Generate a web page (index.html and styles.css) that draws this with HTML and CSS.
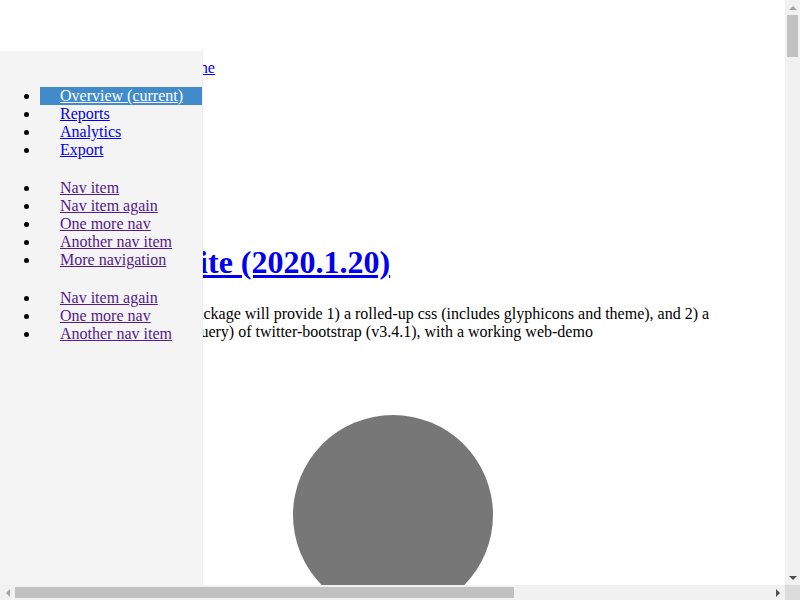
FILE: index.html
```html
<!DOCTYPE html>
<html>
<head>
<meta charset="utf-8">
<title>bootstrap-lite</title>
<link rel="stylesheet" href="styles.css">
</head>
<body>
<nav class="navbar">
  <div class="navbar-header"><a class="brand" href="#">Project name</a></div>
  <ul class="navbar-nav">
    <li><a href="#">Dashboard</a></li>
    <li><a href="#">Settings</a></li>
    <li><a href="#">Profile</a></li>
    <li><a href="#">Help</a></li>
  </ul>
</nav>
<div class="sidebar">
  <ul class="nav-sidebar">
    <li class="active"><a href="#">Overview <span>(current)</span></a></li>
    <li><a href="#">Reports</a></li>
    <li><a href="#">Analytics</a></li>
    <li><a href="#">Export</a></li>
  </ul>
  <ul class="nav-sidebar visited">
    <li><a href="#">Nav item</a></li>
    <li><a href="#">Nav item again</a></li>
    <li><a href="#">One more nav</a></li>
    <li><a href="#">Another nav item</a></li>
    <li><a href="#">More navigation</a></li>
  </ul>
  <ul class="nav-sidebar visited">
    <li><a href="#">Nav item again</a></li>
    <li><a href="#">One more nav</a></li>
    <li><a href="#">Another nav item</a></li>
  </ul>
</div>
<main class="main">
  <h1 class="title"><a href="#">bootstrap-lite (2020.1.20)</a></h1>
  <p class="lead">this zero-dependency package will provide 1) a rolled-up css (includes glyphicons and theme), and 2) a rolled-up js (includes jquery) of twitter-bootstrap (v3.4.1), with a working web-demo</p>
  <div class="placeholders">
    <div class="placeholder"></div>
  </div>
  <div class="rest"></div>
</main>
<div class="vscroll" aria-hidden="true">
  <div class="sb-btn"><span class="arrow up dim"></span></div>
  <div class="sb-track"><div class="sb-thumb v"></div></div>
  <div class="sb-btn"><span class="arrow down"></span></div>
</div>
<div class="hscroll" aria-hidden="true">
  <div class="sb-btn"><span class="arrow left dim"></span></div>
  <div class="sb-track h"><div class="sb-thumb hz"></div></div>
  <div class="sb-btn"><span class="arrow right"></span></div>
</div>
<div class="sb-corner" aria-hidden="true"></div>
</body>
</html>
```
FILE: styles.css
```css
html {
  background: #fff;
  padding-right: 15px;
}
body {
  margin: 8px;
  padding-top: 51px;
  font-family: "Liberation Serif", "Times New Roman", serif;
  font-size: 16px;
  color: #000;
}
a {
  color: #0000ee;
}
.navbar {
  height: 164px;
}
.navbar-header {
  padding-left: 123px;
}
.navbar-nav {
  margin: 16px 0;
  padding-left: 40px;
}
.sidebar {
  position: fixed;
  top: 51px;
  bottom: 0;
  left: 0;
  z-index: 1000;
  box-sizing: border-box;
  width: 203px;
  padding: 20px;
  overflow: hidden;
  background: #f4f4f4;
  border-right: 1px solid #eee;
}
.nav-sidebar {
  margin: 16px -21px 20px -20px;
  padding-left: 40px;
}
.nav-sidebar a {
  display: block;
  padding: 0 20px;
  white-space: nowrap;
}
.nav-sidebar .active a {
  color: #fff;
  background: #428bca;
}
.visited a {
  color: #551a8b;
}
.main {
  padding: 0 40px;
}
.title {
  margin: 21px 0 23.5px;
  font-size: 32px;
}
.lead {
  margin: 0;
}
.placeholders {
  margin-top: 74px;
  text-align: center;
}
.placeholder {
  width: 200px;
  height: 200px;
  margin: 0 auto;
  border-radius: 50%;
  background: #777;
}
.rest {
  width: 1140px;
  height: 7108px;
}

/* scrollbars */
.vscroll {
  position: fixed;
  top: 0;
  right: 0;
  z-index: 2000;
  display: flex;
  flex-direction: column;
  width: 15px;
  height: 585px;
  background: #f1f1f1;
}
.hscroll {
  position: fixed;
  left: 0;
  bottom: 0;
  z-index: 2000;
  display: flex;
  width: 785px;
  height: 15px;
  background: #f1f1f1;
}
.sb-corner {
  position: fixed;
  right: 0;
  bottom: 0;
  z-index: 2000;
  width: 15px;
  height: 15px;
  background: #dcdcdc;
}
.sb-btn {
  display: flex;
  align-items: center;
  justify-content: center;
  flex: 0 0 15px;
  width: 15px;
  height: 15px;
}
.sb-track {
  flex: 1;
  display: flex;
  flex-direction: column;
  align-items: center;
}
.sb-track.h {
  flex-direction: row;
}
.sb-thumb.v {
  width: 11px;
  height: 42px;
  background: #c1c1c1;
}
.sb-thumb.hz {
  width: 499px;
  height: 11px;
  background: #c1c1c1;
}
.arrow {
  width: 0;
  height: 0;
  border: 4px solid transparent;
}
.arrow.up {
  border-top-width: 0;
  border-bottom-color: #505050;
}
.arrow.down {
  border-bottom-width: 0;
  border-top-color: #505050;
}
.arrow.left {
  border-left-width: 0;
  border-right-color: #505050;
}
.arrow.right {
  border-right-width: 0;
  border-left-color: #505050;
}
.arrow.up.dim {
  border-bottom-color: #a3a3a3;
}
.arrow.left.dim {
  border-right-color: #a3a3a3;
}
```
